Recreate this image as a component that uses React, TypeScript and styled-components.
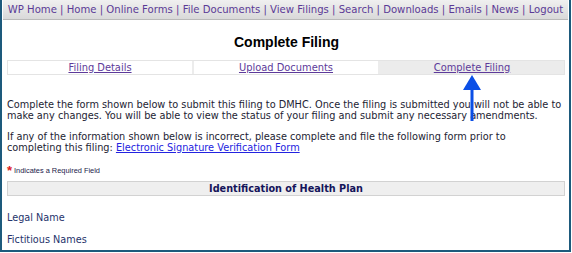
import * as React from 'react'
import styled, { createGlobalStyle } from 'styled-components'

const GlobalStyle = createGlobalStyle`
  html, body {
    margin: 0;
    padding: 0;
    background: #ffffff;
  }
`

const navItems = ['WP Home', 'Home', 'Online Forms', 'File Documents', 'View Filings', 'Search', 'Downloads', 'Emails', 'News', 'Logout']
const tabs = ['Filing Details', 'Upload Documents', 'Complete Filing']

const Frame = styled.div`
  position: relative;
  box-sizing: border-box;
  width: 571px;
  height: 252px;
  border: 2px solid #1d5a7c;
  border-top: none;
  background: #fff;
  overflow: hidden;
  font-family: 'DejaVu Sans', Verdana, sans-serif;
`

const NavBar = styled.div`
  display: flex;
  justify-content: center;
  align-items: center;
  height: 19px;
  margin: 0 1px;
  background: linear-gradient(#f0f0f0, #d9d9d9);
  border-bottom: 1px solid #b9b9b9;
  font-size: 10.1px;
  color: #5b3a96;
  white-space: pre;
`

const NavLink = styled.span`
  color: #5b3a96;
`

const Content = styled.div`
  padding: 0 3px 0 5px;
`

const Title = styled.h1`
  margin: 14px 0 0;
  text-align: center;
  font-family: 'Liberation Sans', Arial, sans-serif;
  font-size: 14px;
  font-weight: bold;
  color: #000;
  line-height: 16px;
`

const TabRow = styled.div`
  display: flex;
  margin: 10px 1px 0 0;
  height: 13px;
  border: 1px solid #e4e4e4;
`

const Tab = styled.div<{ $active?: boolean; $first?: boolean }>`
  flex: 1;
  display: flex;
  justify-content: center;
  align-items: center;
  background: ${p => (p.$active ? '#ececec' : '#fff')};
  border-left: ${p => (p.$first ? 'none' : '2px solid #ececec')};
  font-size: 9.9px;
`

const TabLink = styled.a`
  color: #5d3a9a;
  text-decoration: underline;
`

const Para = styled.p<{ $gap: number }>`
  margin: ${p => p.$gap}px 0 0;
  font-size: 9.75px;
  line-height: 11px;
  color: #1d1d33;
`

const Link = styled.a`
  color: #2323e0;
  text-decoration: underline;
`

const Required = styled.div`
  display: flex;
  align-items: flex-start;
  gap: 2px;
  margin-top: 13px;
  font-family: 'Liberation Sans', Arial, sans-serif;
  font-size: 7.4px;
  color: #1a1a4a;
  line-height: 9px;
`

const Star = styled.span`
  color: #e02020;
  font-size: 13px;
  line-height: 9px;
  font-weight: bold;
`

const SectionHeader = styled.div`
  margin: 6px 1px 0 0;
  height: 13px;
  background: #efefef;
  border: 1px solid #d2d2d2;
  text-align: center;
  font-size: 9.7px;
  font-weight: bold;
  line-height: 13px;
  color: #14145a;
`

const FieldLabel = styled.div<{ $gap: number }>`
  font-size: 9.7px;
  line-height: 12px;
  color: #25336b;
  margin-top: ${p => p.$gap}px;
`

const Arrow = styled.svg`
  position: absolute;
  left: 459px;
  top: 74px;
`

export default function App() {
  return (
    <>
      <GlobalStyle />
      <Frame>
        <NavBar>
          {navItems.map((item, i) => (
            <React.Fragment key={item}>
              {i > 0 && ' | '}
              <NavLink>{item}</NavLink>
            </React.Fragment>
          ))}
        </NavBar>
        <Content>
          <Title>Complete Filing</Title>
          <TabRow>
            {tabs.map((t, i) => (
              <Tab key={t} $first={i === 0} $active={i === 2}>
                <TabLink href="#">{t}</TabLink>
              </Tab>
            ))}
          </TabRow>
          <Para $gap={24}>
            Complete the form shown below to submit this filing to DMHC. Once the filing is submitted you will not be able to
            make any changes. You will be able to view the status of your filing and submit any necessary amendments.
          </Para>
          <Para $gap={10}>
            If any of the information shown below is incorrect, please complete and file the following form prior to
            <br />
            completing this filing: <Link href="#">Electronic Signature Verification Form</Link>
          </Para>
          <Required>
            <Star>*</Star>
            <span>Indicates a Required Field</span>
          </Required>
          <SectionHeader>Identification of Health Plan</SectionHeader>
          <FieldLabel $gap={16}>Legal Name</FieldLabel>
          <FieldLabel $gap={10}>Fictitious Names</FieldLabel>
        </Content>
        <Arrow width="22" height="48" viewBox="0 0 22 48">
          <polygon points="11,1 20,16 2,16" fill="#0b4fe6" />
          <rect x="9.5" y="14" width="3" height="33" fill="#0b4fe6" />
        </Arrow>
      </Frame>
    </>
  )
}
